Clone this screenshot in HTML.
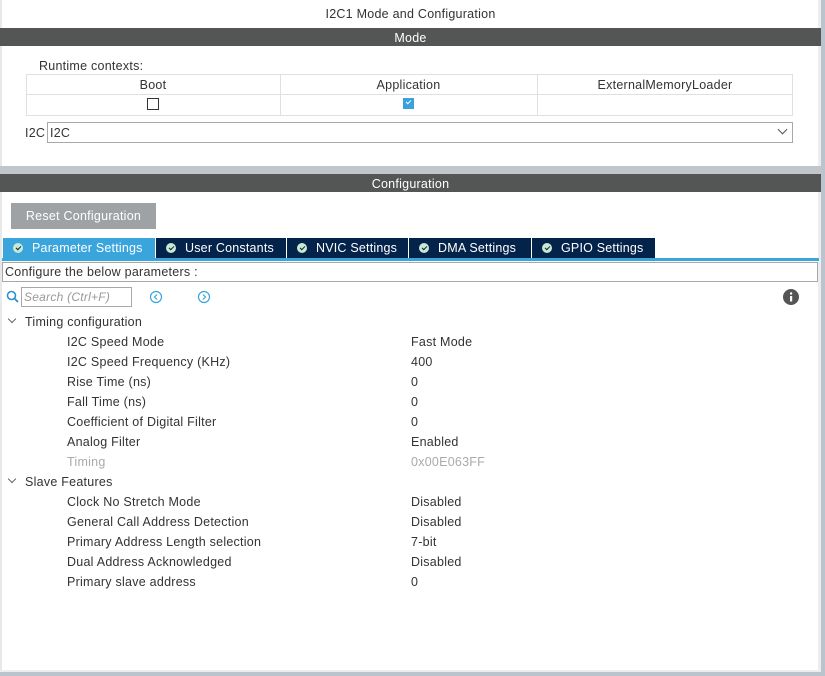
<!DOCTYPE html>
<html><head><style>
*{margin:0;padding:0;box-sizing:border-box}
body{width:825px;height:676px;overflow:hidden;background:#fff;font-family:"Liberation Sans",sans-serif;font-size:12.5px;color:#333;position:relative;letter-spacing:0.25px}
.a{position:absolute;white-space:nowrap}
.bar{position:absolute;left:0;width:821px;height:18px;background:#535654;color:#fff;text-align:center;line-height:20px;font-size:12.5px}
.tab{position:absolute;top:238px;height:20px;background:#03234b;color:#fff;line-height:20px;font-size:12.5px;padding-left:29px;letter-spacing:0.2px}
.tab:before{content:"";position:absolute;left:10px;top:5px;width:10px;height:10px;border-radius:50%;background:#c9e9d1}
.tab:after{content:"";position:absolute;left:13px;top:8px;width:4px;height:2px;border-left:1.5px solid #03234b;border-bottom:1.5px solid #03234b;transform:rotate(-45deg)}
.row{position:absolute;left:67px;height:20px;line-height:22px}
.val{position:absolute;left:411px;height:20px;line-height:22px}
</style></head><body>
<div class="a" style="left:0;top:0;width:2px;height:676px;background:#e8e8e8"></div>
<div class="a" style="left:818px;top:0;width:3px;height:676px;background:#ededed"></div>
<div class="a" style="left:821px;top:0;width:4px;height:676px;background:#b9c4cc"></div>
<div class="a" style="left:0;top:670px;width:821px;height:2px;background:#ededed"></div>
<div class="a" style="left:0;top:672px;width:825px;height:4px;background:#b9c4cc"></div>
<div class="a" style="left:0;top:7px;width:821px;text-align:center">I2C1 Mode and Configuration</div>
<div class="bar" style="top:28px">Mode</div>
<div class="a" style="left:39px;top:59px">Runtime contexts:</div>
<div class="a" style="left:26px;top:74px;width:767px;height:42px;border:1px solid #e0e0e0"></div>
<div class="a" style="left:26px;top:94px;width:767px;height:1px;background:#e0e0e0"></div>
<div class="a" style="left:280px;top:74px;width:1px;height:42px;background:#e0e0e0"></div>
<div class="a" style="left:537px;top:74px;width:1px;height:42px;background:#e0e0e0"></div>
<div class="a" style="left:26px;top:78px;width:254px;text-align:center">Boot</div>
<div class="a" style="left:280px;top:78px;width:257px;text-align:center">Application</div>
<div class="a" style="left:537px;top:78px;width:256px;text-align:center">ExternalMemoryLoader</div>
<div class="a" style="left:147px;top:98px;width:12px;height:12px;border:1px solid #333"></div>
<div class="a" style="left:403px;top:98px;width:11px;height:11px;background:#3ba0db"><div style="position:absolute;left:3px;top:2px;width:5px;height:3px;border-left:1.5px solid #fff;border-bottom:1.5px solid #fff;transform:rotate(-45deg)"></div></div>
<div class="a" style="left:25px;top:126px">I2C</div>
<div class="a" style="left:47px;top:122px;width:746px;height:21px;border:1px solid #a8a8a8;padding-left:2px;line-height:21px">I2C<span style="position:absolute;right:6px;top:3px;width:7px;height:7px;border-right:1px solid #555;border-bottom:1px solid #555;transform:rotate(45deg)"></span></div>
<div class="a" style="left:0;top:166px;width:821px;height:8px;background:#bfc6cc"></div>
<div class="bar" style="top:174px">Configuration</div>
<div class="a" style="left:11px;top:203px;width:145px;height:26px;background:#9ea2a5;color:#fff;line-height:27px;text-align:center">Reset Configuration</div>
<div class="tab" style="left:3px;width:152px;background:#3aa5dc">Parameter Settings</div>
<div class="tab" style="left:156px;width:130px">User Constants</div>
<div class="tab" style="left:287px;width:121px">NVIC Settings</div>
<div class="tab" style="left:409px;width:122px">DMA Settings</div>
<div class="tab" style="left:532px;width:123px">GPIO Settings</div>
<div class="a" style="left:2px;top:258px;width:817px;height:3px;background:#3aa5dc"></div>
<div class="a" style="left:2px;top:262px;width:816px;height:20px;border:1px solid #a8a8a8;line-height:19px;padding-left:2px">Configure the below parameters :</div>
<svg class="a" style="left:6px;top:290px" width="14" height="14"><circle cx="5.5" cy="5.5" r="4" fill="none" stroke="#2a8fd0" stroke-width="1.6"/><line x1="8.5" y1="8.5" x2="12" y2="12" stroke="#2a8fd0" stroke-width="1.8"/></svg>
<div class="a" style="left:21px;top:287px;height:20px;border:1px solid #a8a8a8;color:#999;font-style:italic;line-height:19px;padding-left:2px;font-size:12px;overflow:hidden;width:111px">Search (Ctrl+F)</div>
<svg class="a" style="left:149px;top:290px" width="14" height="14"><circle cx="7" cy="7" r="5.5" fill="none" stroke="#3aa5dc" stroke-width="1.2"/><path d="M8 4.5L5.5 7L8 9.5" fill="none" stroke="#3aa5dc" stroke-width="1.2"/></svg>
<svg class="a" style="left:197px;top:290px" width="14" height="14"><circle cx="7" cy="7" r="5.5" fill="none" stroke="#3aa5dc" stroke-width="1.2"/><path d="M6 4.5L8.5 7L6 9.5" fill="none" stroke="#3aa5dc" stroke-width="1.2"/></svg>
<svg class="a" style="left:783px;top:289px" width="16" height="16"><circle cx="8" cy="8" r="8" fill="#555"/><rect x="7" y="7" width="2.2" height="5.5" fill="#fff"/><circle cx="8.1" cy="4.5" r="1.2" fill="#fff"/></svg>
<div class="a" style="left:9px;top:316px;width:6px;height:6px;border-right:1px solid #666;border-bottom:1px solid #666;transform:rotate(45deg)"></div>
<div class="row" style="left:25px;top:311px">Timing configuration</div>
<div class="row" style="top:331px">I2C Speed Mode</div><div class="val" style="top:331px">Fast Mode</div>
<div class="row" style="top:351px">I2C Speed Frequency (KHz)</div><div class="val" style="top:351px">400</div>
<div class="row" style="top:371px">Rise Time (ns)</div><div class="val" style="top:371px">0</div>
<div class="row" style="top:391px">Fall Time (ns)</div><div class="val" style="top:391px">0</div>
<div class="row" style="top:411px">Coefficient of Digital Filter</div><div class="val" style="top:411px">0</div>
<div class="row" style="top:431px">Analog Filter</div><div class="val" style="top:431px">Enabled</div>
<div class="row" style="top:451px;color:#aaa">Timing</div><div class="val" style="top:451px;color:#aaa">0x00E063FF</div>
<div class="a" style="left:9px;top:476px;width:6px;height:6px;border-right:1px solid #666;border-bottom:1px solid #666;transform:rotate(45deg)"></div>
<div class="row" style="left:25px;top:471px">Slave Features</div>
<div class="row" style="top:491px">Clock No Stretch Mode</div><div class="val" style="top:491px">Disabled</div>
<div class="row" style="top:511px">General Call Address Detection</div><div class="val" style="top:511px">Disabled</div>
<div class="row" style="top:531px">Primary Address Length selection</div><div class="val" style="top:531px">7-bit</div>
<div class="row" style="top:551px">Dual Address Acknowledged</div><div class="val" style="top:551px">Disabled</div>
<div class="row" style="top:571px">Primary slave address</div><div class="val" style="top:571px">0</div>
</body></html>
